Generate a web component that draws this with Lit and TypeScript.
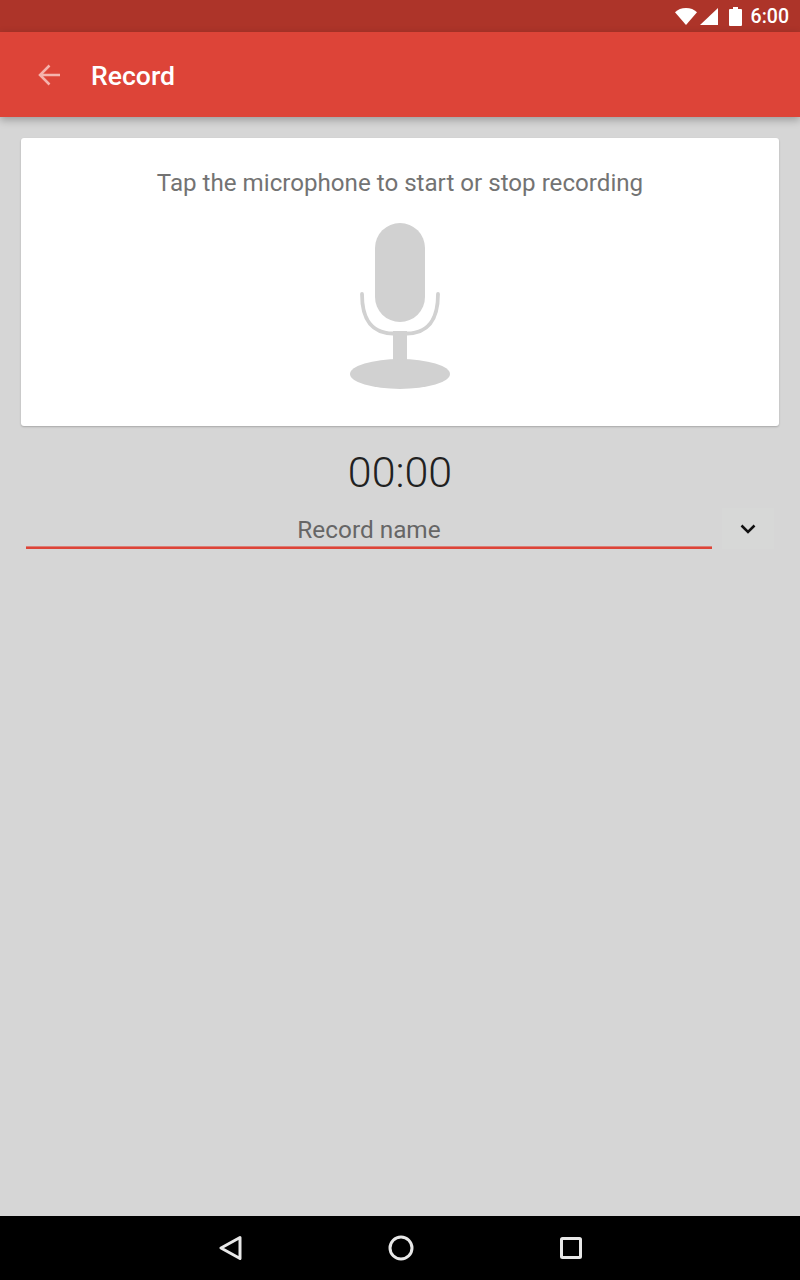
import { LitElement, html, css } from "lit";
import { customElement } from "lit/decorators.js";

@customElement("app-root")
export class AppRoot extends LitElement {
  static styles = css`
    :host {
      display: flex;
      flex-direction: column;
      height: 1280px;
      background: #d6d6d6;
      font-family: Roboto, "Noto Sans", sans-serif;
      overflow: hidden;
    }
    .status {
      height: 32px;
      flex: none;
      background: #ad3429;
      display: flex;
      align-items: center;
      justify-content: flex-end;
      padding-right: 11px;
      color: #fff;
      font-size: 19.5px;
      font-weight: 500;
    }
    .status svg { display: block; fill: #fff; }
    .signal { margin-left: 3px; }
    .battery { margin-left: 11px; }
    .clock { margin-left: 9px; }
    .toolbar {
      height: 85px;
      flex: none;
      background: #dd4438;
      display: flex;
      align-items: center;
      padding-left: 38px;
      box-shadow: 0 3px 8px rgba(0, 0, 0, 0.28);
      position: relative;
      color: #fff;
      font-size: 26.6px;
      font-weight: 500;
    }
    .toolbar svg { display: block; margin-right: 31px; }
    .toolbar span { padding-top: 1px; }
    .content {
      flex: 1;
      display: flex;
      flex-direction: column;
      padding: 21px 21px 0;
    }
    .card {
      height: 288px;
      box-sizing: border-box;
      background: #fff;
      border-radius: 3px;
      box-shadow: 0 1px 2px rgba(0, 0, 0, 0.22);
      display: flex;
      flex-direction: column;
      align-items: center;
      padding-top: 30px;
    }
    .hint {
      font-size: 24.15px;
      line-height: 30px;
      color: #737373;
    }
    .mic { display: block; margin-top: 25px; fill: #d1d1d1; }
    .timer {
      margin-top: 18px;
      text-align: center;
      font-size: 43px;
      line-height: 56px;
      font-weight: 300;
      color: #212121;
    }
    .name-row {
      display: flex;
      align-items: flex-end;
      margin-top: 8px;
      padding-left: 5px;
    }
    .name {
      width: 686px;
      height: 39px;
      box-sizing: border-box;
      padding-top: 3px;
      border-bottom: 2px solid #dd4438;
      box-shadow: inset 0 -1px 0 rgba(221, 68, 56, 0.6);
      text-align: center;
      font-size: 24.35px;
      line-height: 34px;
      color: #666;
    }
    .drop {
      width: 52px;
      height: 41px;
      margin-left: 10px;
      background: #d7d8d7;
      display: flex;
      align-items: center;
      justify-content: center;
    }
    .nav {
      height: 64px;
      flex: none;
      background: #000;
      display: flex;
      align-items: center;
      justify-content: center;
      padding-left: 2px;
    }
    .nav svg { display: block; fill: none; stroke: #e8e8e8; stroke-width: 3; stroke-linejoin: round; }
    .nav .back, .nav .home { margin-right: 145px; }
  `;

  render() {
    return html`
      <div class="status">
        <svg width="22" height="17" viewBox="0 0 22 17"><path d="M0 4.200C2.800 1.600 6.600 0 11 0s8.200 1.600 11 4.200L11 17z"/></svg>
        <svg class="signal" width="18" height="17" viewBox="0 0 18 17"><path d="M0 17L18 0v17z"/></svg>
        <svg class="battery" width="13" height="19" viewBox="0 0 13 19"><path d="M4 0h5v2h3a1 1 0 0 1 1 1v15a1 1 0 0 1-1 1H1a1 1 0 0 1-1-1V3a1 1 0 0 1 1-1h3z"/></svg>
        <span class="clock">6:00</span>
      </div>
      <div class="toolbar">
        <svg width="22" height="22" viewBox="0 0 22 22" fill="none" stroke="#f5b3ad" stroke-width="2.500">
          <path d="M22 11H3M11.500 1.500L2 11l9.500 9.500"/>
        </svg>
        <span>Record</span>
      </div>
      <div class="content">
        <div class="card">
          <div class="hint">Tap the microphone to start or stop recording</div>
          <svg class="mic" width="100" height="166" viewBox="0 0 100 166">
            <rect x="25" y="0" width="50" height="99" rx="25"/>
            <path d="M12 71C12 90 17 110 43 110.500H57C83 110 88 90 88 71" fill="none" stroke="#d1d1d1" stroke-width="3.800" stroke-linecap="round"/>
            <rect x="43" y="108" width="14" height="34"/>
            <ellipse cx="50" cy="151" rx="50" ry="15"/>
          </svg>
        </div>
        <div class="timer">00:00</div>
        <div class="name-row">
          <div class="name">Record name</div>
          <div class="drop">
            <svg width="16" height="10" viewBox="0 0 16 10" fill="none" stroke="#111" stroke-width="2.500"><path d="M1.500 1.500L8 8l6.500-6.500"/></svg>
          </div>
        </div>
      </div>
      <div class="nav">
        <svg class="back" width="24" height="26" viewBox="0 0 24 26"><path d="M21 2.500L2 13l19 10.500z"/></svg>
        <svg class="home" width="26" height="26" viewBox="0 0 26 26"><circle cx="13" cy="13" r="11"/></svg>
        <svg width="24" height="24" viewBox="0 0 24 24"><rect x="2.500" y="2.500" width="19" height="19" rx="1"/></svg>
      </div>
    `;
  }
}
